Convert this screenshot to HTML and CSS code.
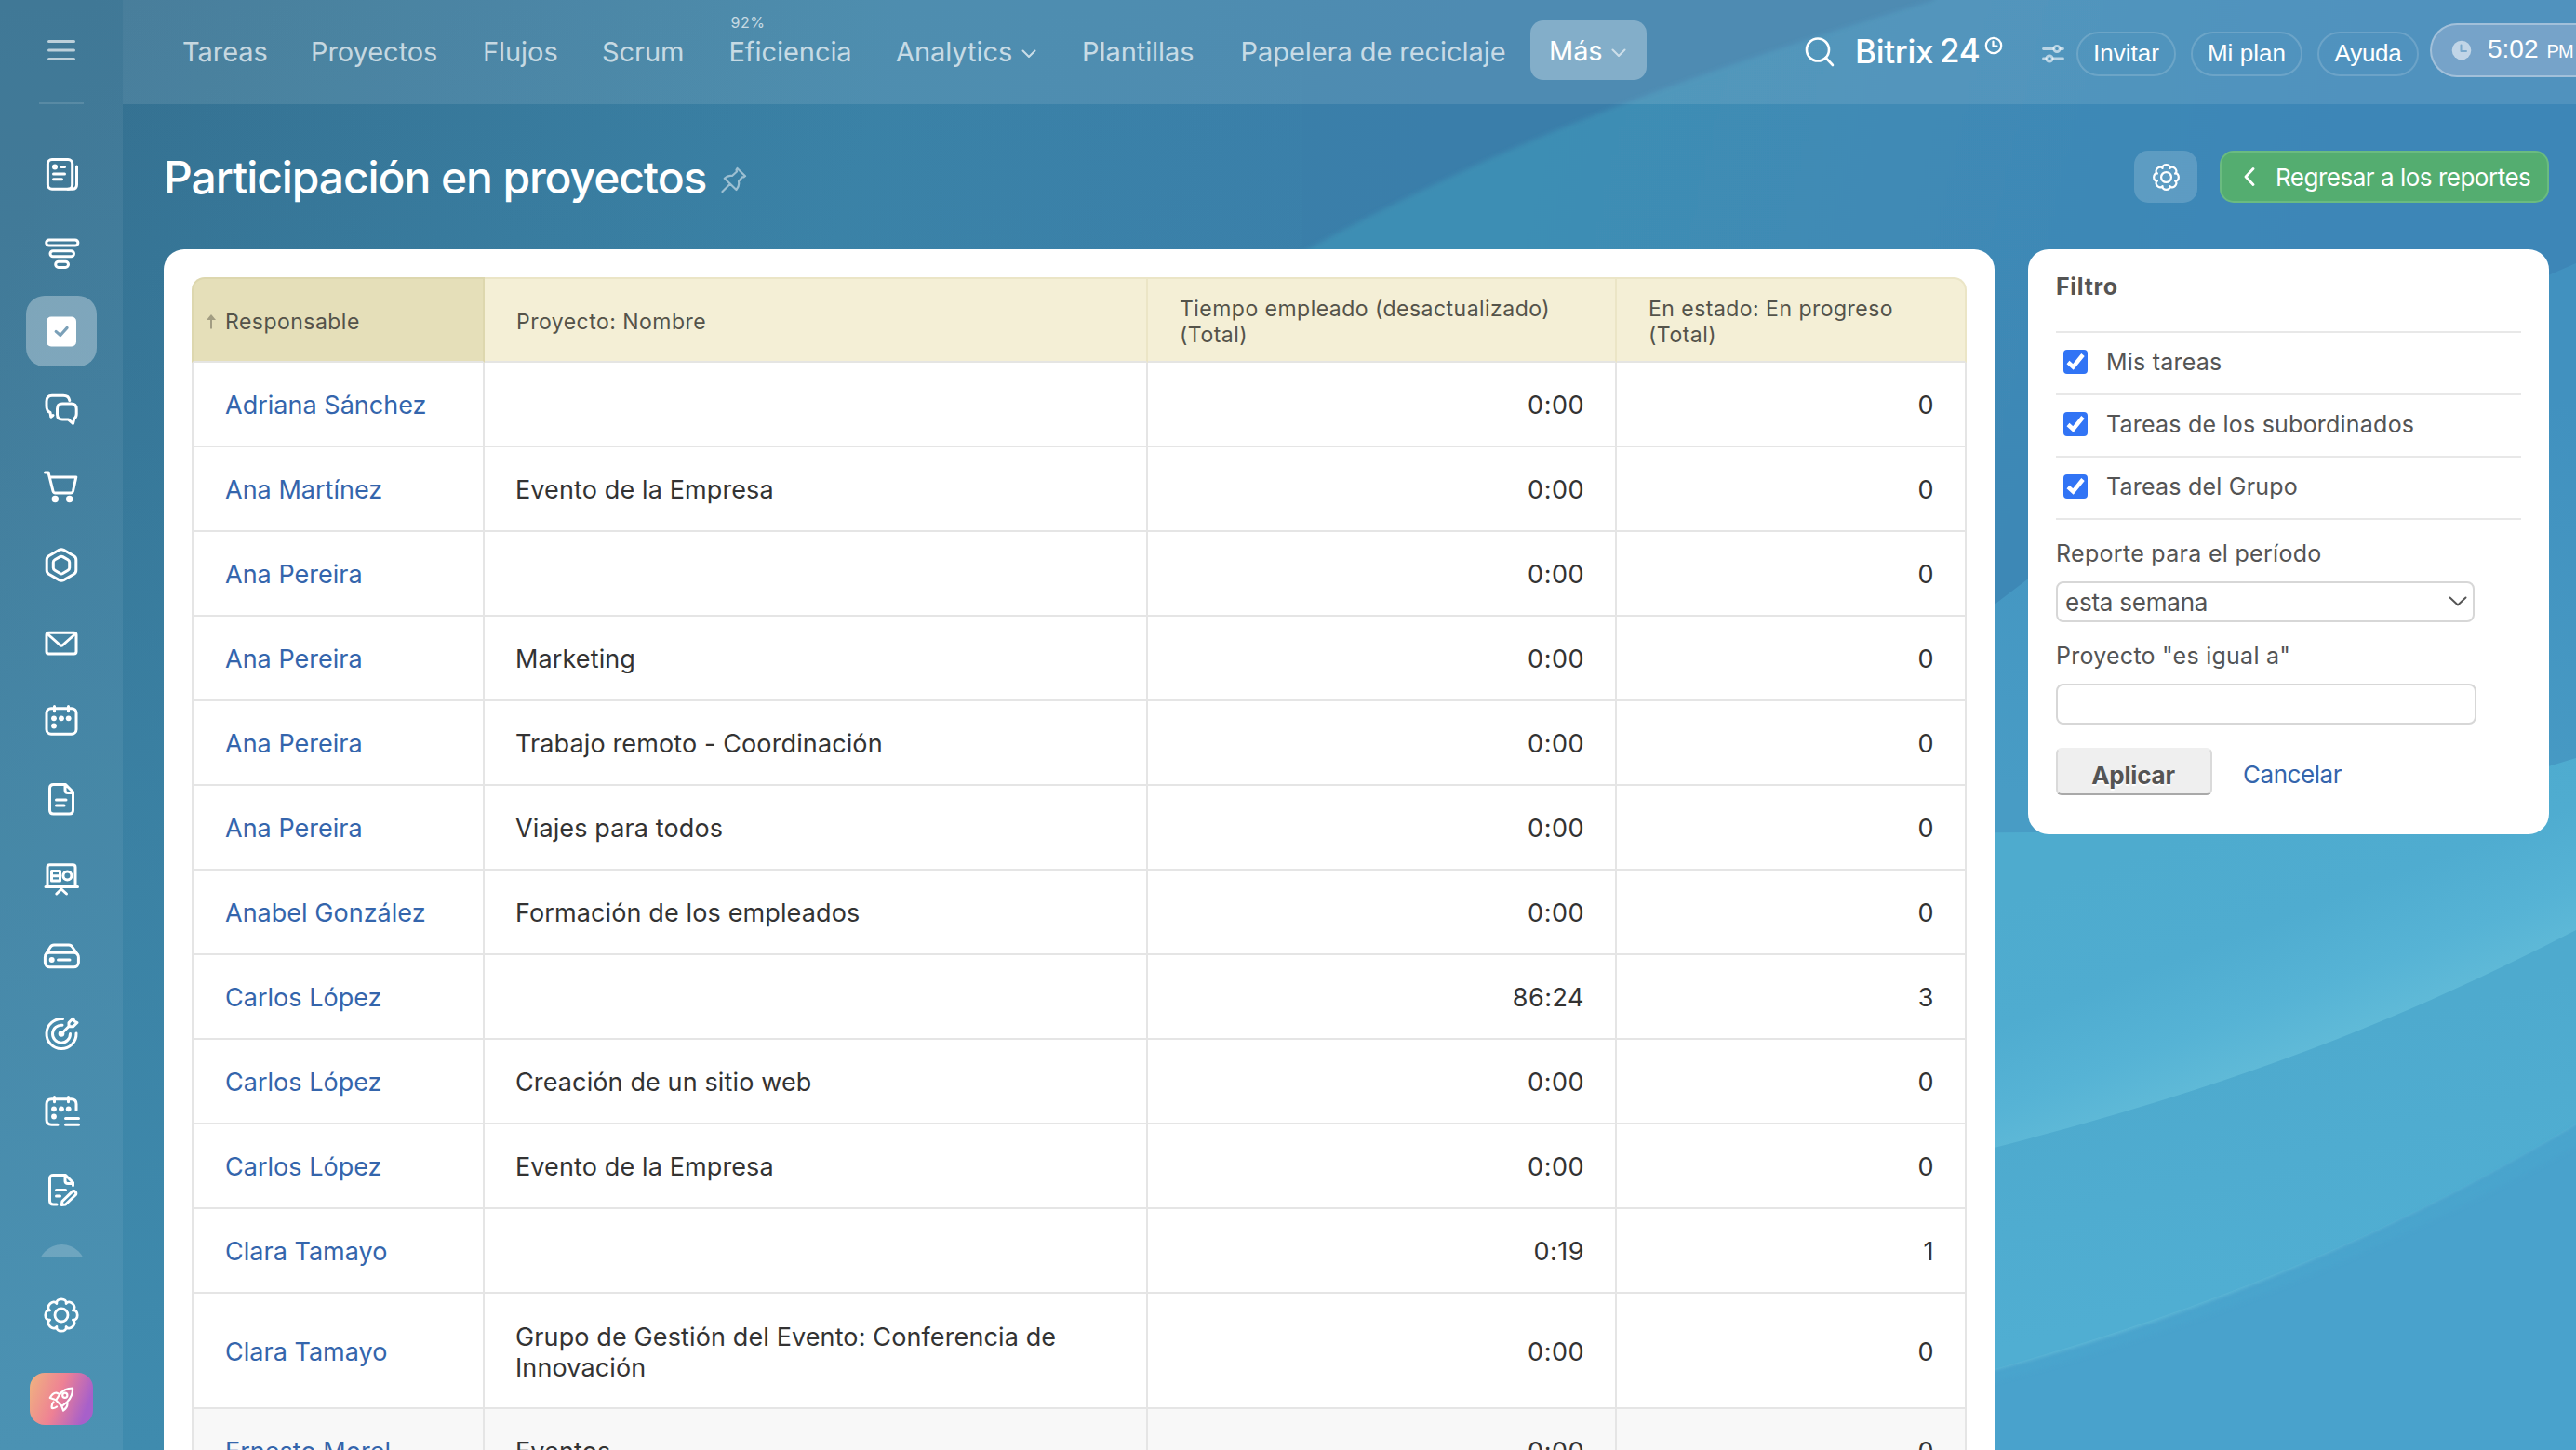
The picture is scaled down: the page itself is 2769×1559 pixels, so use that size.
FILE: index.html
```
<!DOCTYPE html>
<html lang="es">
<head>
<meta charset="utf-8">
<title>Participación en proyectos</title>
<link rel="stylesheet" href="styles.css">
</head>
<body>
<svg class="wallpaper" viewBox="0 0 2769 1559" preserveAspectRatio="none" aria-hidden="true">
  <defs>
    <linearGradient id="base" gradientUnits="userSpaceOnUse" x1="100" y1="0" x2="1700" y2="500">
      <stop offset="0" stop-color="#346f8f"/><stop offset=".5" stop-color="#3a81a6"/><stop offset=".85" stop-color="#3a7eaa"/><stop offset="1" stop-color="#3a7eaa"/>
    </linearGradient>
    <linearGradient id="down" x1="0" y1="0" x2="0" y2="1">
      <stop offset="0" stop-color="#3f8cae" stop-opacity="0"/><stop offset=".3" stop-color="#3f8cae" stop-opacity=".2"/><stop offset="1" stop-color="#3f8bae"/>
    </linearGradient>
    <linearGradient id="ray" gradientUnits="userSpaceOnUse" x1="1650" y1="100" x2="2500" y2="300">
      <stop offset="0" stop-color="#3e8eb4"/><stop offset=".45" stop-color="#3f8ab5"/><stop offset="1" stop-color="#3d86b7"/>
    </linearGradient>
    <linearGradient id="mid" gradientUnits="userSpaceOnUse" x1="2500" y1="380" x2="2400" y2="900">
      <stop offset="0" stop-color="#4191bf"/><stop offset="1" stop-color="#489cc5"/>
    </linearGradient>
    <linearGradient id="wave" gradientUnits="userSpaceOnUse" x1="2380" y1="880" x2="2480" y2="1140">
      <stop offset="0" stop-color="#4eabce"/><stop offset=".45" stop-color="#4facd0"/><stop offset=".75" stop-color="#56b3d5"/><stop offset="1" stop-color="#61bbd8"/>
    </linearGradient>
    <linearGradient id="low" gradientUnits="userSpaceOnUse" x1="2440" y1="1130" x2="2500" y2="1360">
      <stop offset="0" stop-color="#4eaace"/><stop offset="1" stop-color="#50aed2"/>
    </linearGradient>
    <filter id="soft" x="-5%" y="-5%" width="110%" height="110%"><feGaussianBlur stdDeviation="2.5"/></filter>
  </defs>
  <rect width="2769" height="1559" fill="url(#base)"/>
  <rect width="1400" height="1559" fill="url(#down)"/>
  <path filter="url(#soft)" d="M1300 330Q1420 255 1560 190Q1760 95 2080 0V-40H2800V700H1300Z" fill="url(#ray)"/>
  <path d="M2100 685Q2400 440 2769 283V1559H2100Z" fill="url(#mid)"/>
  <path d="M2100 895Q2500 900 2769 815V1559H2100Z" fill="url(#wave)"/>
  <path filter="url(#soft)" d="M2100 1484C2340 1425 2560 1335 2800 1190V1620H2100Z" fill="#49a2cc"/>
  <path d="M2100 1245C2370 1178 2560 1108 2769 1000V1208C2560 1335 2340 1420 2100 1484Z" fill="url(#low)"/>
  <path filter="url(#soft)" d="M2100 1488C2340 1429 2560 1341 2800 1193V1215C2560 1349 2340 1437 2100 1496Z" fill="#4aa4cd"/>
</svg>

<div class="app">
  <aside class="sidebar">
    <div class="burger"><svg width="32" height="24" viewBox="0 0 32 24"><path d="M2.500 2.500H29.500M2.500 12H29.500M2.500 21.500H29.500"/></svg></div>
    <div class="menu">
      <div class="item"><svg viewBox="0 0 84 84"><rect x="27.400" y="26.500" width="26.300" height="31.800" rx="4.500"/><path d="M58.500 34V53.500Q58.500 58.300 53.500 58.300H49M42 34.500H45.500M33.500 42H45.500M33.500 47.800H42.500"/><circle class="fill" cx="35" cy="34.500" r="3"/></svg></div>
      <div class="item"><svg viewBox="0 0 84 84"><rect x="25.700" y="28.900" width="34.200" height="6.200" rx="3.100"/><rect x="30" y="40.800" width="25.500" height="6" rx="3"/><rect x="35.700" y="52.200" width="13.800" height="6.200" rx="3.100"/></svg></div>
      <div class="item active"><svg viewBox="0 0 84 84"><rect class="fill" x="26" y="26.500" width="32" height="32" rx="5"/><path class="tick" d="M35.500 42.500L40.800 47L48.800 38"/></svg></div>
      <div class="item"><svg viewBox="0 0 84 84"><path d="M33 49.500L30.800 51.200L30 46.500Q26 45 26 39.500V34.500Q26 28.300 32 28.300H44Q50 28.300 50.800 33.500"/><path d="M43 37H52.500Q58.200 37 58.200 42.800V48Q58.200 51.500 55.800 53.200L54.500 58.300L49.500 54H43Q37.500 54 37.500 48.500V42.500Q37.500 37 43 37Z"/></svg></div>
      <div class="item"><svg viewBox="0 0 84 84"><path d="M24.500 27H28L33 47Q33.500 49 35.500 49H52Q54 49 54.500 47L57.800 32H29.500"/><circle class="fill" cx="35.300" cy="55.500" r="3.700"/><circle class="fill" cx="50.700" cy="55.500" r="3.700"/></svg></div>
      <div class="item"><svg viewBox="0 0 84 84"><path d="M39.500 26.300Q42 25.200 44.500 26.300L55.500 32.700Q57.800 34.200 57.800 37V48Q57.800 50.800 55.500 52.300L44.500 58.600Q42 59.900 39.500 58.600L28.500 52.300Q26.200 50.800 26.200 48V37Q26.200 34.200 28.500 32.700Z"/><path d="M40.500 33.600Q42 32.800 43.500 33.600L49 36.800Q50.700 37.800 50.700 39.500V45.500Q50.700 47.200 49 48.200L43.500 51.500Q42 52.300 40.500 51.500L35 48.200Q33.300 47.200 33.300 45.500V39.500Q33.300 37.800 35 36.800Z"/></svg></div>
      <div class="item"><svg viewBox="0 0 84 84"><rect x="26" y="31.200" width="32" height="22.800" rx="2.500"/><path d="M27 32.500L40.500 44.500Q42 45.700 43.500 44.500L57 32.500"/></svg></div>
      <div class="item"><svg viewBox="0 0 84 84"><rect x="26" y="28.700" width="32" height="27.500" rx="5"/><path d="M34.500 26.500V31.800M49.500 26.500V31.800"/><g class="fill"><circle cx="34" cy="39.300" r="2.900"/><circle cx="42" cy="39.300" r="2.900"/><circle cx="49.700" cy="39.300" r="2.900"/><circle cx="34" cy="47.500" r="2.900"/></g></svg></div>
      <div class="item"><svg viewBox="0 0 84 84"><path d="M33.500 26.500H46.500L54.500 34.500V54Q54.500 58 50.500 58H33.500Q29.500 58 29.500 54V30.500Q29.500 26.500 33.500 26.500ZM46 27V32.500Q46 35.500 49 35.500H54M36.500 43H47M36.500 49H45"/></svg></div>
      <div class="item"><svg viewBox="0 0 84 84"><path d="M27 52V31.500Q27 28.800 29.700 28.800H54.300Q57 28.800 57 31.500V52M25 52.500H59.500M36.800 60L42 55L47.500 60M31.500 35.500H40.500V46H31.500ZM31.500 40.700H40.500"/><circle cx="48.400" cy="40.600" r="4.500"/></svg></div>
      <div class="item"><svg viewBox="0 0 84 84"><path d="M25 41.500L30 33.500Q31.500 31 34 31H50Q52.500 31 54 33.500L59.500 41.500"/><rect x="24.400" y="39.300" width="36" height="15.500" rx="5"/><path d="M38.500 47H51"/><circle class="fill" cx="31.700" cy="47" r="3"/></svg></div>
      <div class="item"><svg viewBox="0 0 84 84"><path d="M43.500 26.600A16 16 0 1 0 58 42M43 33.200A9.500 9.500 0 1 0 51.500 42.500M42 42.500L50.500 34M50 34.500V30.500L54.500 26L56 29L59 30.500L54.500 34.800Z"/><circle class="fill" cx="42" cy="42.500" r="3.300"/></svg></div>
      <div class="item"><svg viewBox="0 0 84 84"><path d="M38 56.300H31.500Q26 56.300 26 51V34Q26 28.700 31.500 28.700H52.500Q58 28.700 58 34V40.500M34.500 26.500V31.800M49.500 26.500V31.800M46.500 49.500H60.500M46.500 56.300H60.500"/><g class="fill"><circle cx="34" cy="39.300" r="2.900"/><circle cx="42" cy="39.300" r="2.900"/><circle cx="49.700" cy="39.300" r="2.900"/><circle cx="34" cy="47.500" r="2.900"/></g></svg></div>
      <div class="item"><svg viewBox="0 0 84 84"><path d="M37 58H33.500Q29.500 58 29.500 54V30.500Q29.500 26.500 33.500 26.500H46.500L54.500 34.500V37.500M46 27V32.500Q46 35.500 49 35.500H54M36.500 42.500H46.500M36.500 49H40.500M42.300 58.500L43 54.500L53.500 44.300Q55.500 42.800 57.200 44.500Q58.500 46.300 57 48L46.500 58Z"/></svg></div>
      <div class="item more"><span></span></div>
    </div>
    <div class="gear"><svg viewBox="-20 -20 40 40" width="40" height="40"><path d="M12.400 -5.100C18.800 -6.600 18.800 6.600 12.400 5.100C18 8.600 8.600 18 5.100 12.400C6.600 18.800 -6.600 18.800 -5.100 12.400C-8.600 18 -18 8.600 -12.400 5.100C-18.800 6.600 -18.800 -6.600 -12.400 -5.100C-18 -8.600 -8.600 -18 -5.100 -12.400C-6.600 -18.800 6.600 -18.800 5.100 -12.400C8.600 -18 18 -8.600 12.400 -5.100Z"/><circle r="7"/></svg></div>
    <div class="rocket"><svg viewBox="0 0 28 28" width="28" height="28"><path d="M26 2.500Q26.500 11 20.500 17L14.500 22L8.200 15.500L12 9.500Q17 2.500 26 2.500ZM12 9L8.500 7.500Q4 8 1.800 13L8.200 15.200M20.200 17.500Q21.500 22.500 16 26.500L14.500 22.300M5.500 17.500Q3 20 3.800 24Q7 24.300 9 22.500"/><circle cx="17.800" cy="10.200" r="2.600"/></svg></div>
  </aside>

  <div class="content">
    <header class="topbar">
      <nav class="tabs">
        <a>Tareas</a><a>Proyectos</a><a>Flujos</a><a>Scrum</a>
        <a class="eff"><small>92%</small>Eficiencia</a>
        <a>Analytics <svg class="chev" viewBox="0 0 16 10"><path d="M1.500 1.500L8 8L14.500 1.500"/></svg></a>
        <a>Plantillas</a><a>Papelera de reciclaje</a>
        <a class="current">Más <svg class="chev" viewBox="0 0 16 10"><path d="M1.500 1.500L8 8L14.500 1.500"/></svg></a>
      </nav>
      <svg class="search" viewBox="0 0 32 32"><circle cx="14" cy="13.500" r="12"/><path d="M22.500 22L30 30"/></svg>
      <div class="logo"><b>Bitrix</b><i>24</i><svg viewBox="0 0 20 20"><circle cx="10" cy="10" r="8.200"/><path d="M9.500 5.500V10.500H13.500"/></svg></div>
      <svg class="sliders" viewBox="0 0 24 22"><path d="M1.500 5.500H12M20 5.500H22.500M1.500 16H4M12 16H22.500"/><circle cx="16" cy="5.500" r="3.200"/><circle cx="8" cy="16" r="3.200"/></svg>
      <div class="pill invite">Invitar</div>
      <div class="pill plan">Mi plan</div>
      <div class="pill help">Ayuda</div>
      <div class="clock"><svg viewBox="0 0 22 22"><circle cx="11" cy="11" r="10.300"/><path d="M10.500 5.500V12H16"/></svg><span>5:02</span><small>PM</small></div>
    </header>

    <div class="titlebar">
      <h1>Participación en proyectos</h1>
      <svg class="pin" viewBox="0 0 28 28"><path d="M17.500 2L26 10.200L24.200 11.500L23 11.300L19 16Q20 21 16.500 25L3.800 12.800Q7.500 9 12 10L17 5.500L16.500 3.500ZM9.800 18.800L1.500 27"/></svg>
      <button class="settings"><svg viewBox="-20 -20 40 40"><path d="M12.400 -5.100C18.800 -6.600 18.800 6.600 12.400 5.100C18 8.600 8.600 18 5.100 12.400C6.600 18.800 -6.600 18.800 -5.100 12.400C-8.600 18 -18 8.600 -12.400 5.100C-18.800 6.600 -18.800 -6.600 -12.400 -5.100C-18 -8.600 -8.600 -18 -5.100 -12.400C-6.600 -18.800 6.600 -18.800 5.100 -12.400C8.600 -18 18 -8.600 12.400 -5.100Z"/><circle r="7"/></svg></button>
      <button class="back"><svg viewBox="0 0 12 20"><path d="M10 1.500L2 10L10 18.500"/></svg>Regresar a los reportes</button>
    </div>

    <main class="panels">
      <section class="card report">
        <table>
          <colgroup><col class="c1"><col class="c2"><col class="c3"><col class="c4"></colgroup>
          <thead><tr><th class="sorted"><svg class="arrow" viewBox="0 0 12 16"><path d="M6 15.500V5"/><path class="head" d="M6 0L11 6H1Z"/></svg>Responsable</th><th>Proyecto: Nombre</th><th>Tiempo empleado (desactualizado) (Total)</th><th>En estado: En progreso (Total)</th></tr></thead>
          <tbody>
            <tr><td><a>Adriana Sánchez</a></td><td></td><td>0:00</td><td>0</td></tr>
            <tr><td><a>Ana Martínez</a></td><td>Evento de la Empresa</td><td>0:00</td><td>0</td></tr>
            <tr><td><a>Ana Pereira</a></td><td></td><td>0:00</td><td>0</td></tr>
            <tr><td><a>Ana Pereira</a></td><td>Marketing</td><td>0:00</td><td>0</td></tr>
            <tr><td><a>Ana Pereira</a></td><td>Trabajo remoto - Coordinación</td><td>0:00</td><td>0</td></tr>
            <tr><td><a>Ana Pereira</a></td><td>Viajes para todos</td><td>0:00</td><td>0</td></tr>
            <tr><td><a>Anabel González</a></td><td>Formación de los empleados</td><td>0:00</td><td>0</td></tr>
            <tr><td><a>Carlos López</a></td><td></td><td>86:24</td><td>3</td></tr>
            <tr><td><a>Carlos López</a></td><td>Creación de un sitio web</td><td>0:00</td><td>0</td></tr>
            <tr><td><a>Carlos López</a></td><td>Evento de la Empresa</td><td>0:00</td><td>0</td></tr>
            <tr><td><a>Clara Tamayo</a></td><td></td><td>0:19</td><td>1</td></tr>
            <tr class="tall"><td><a>Clara Tamayo</a></td><td>Grupo de Gestión del Evento: Conferencia de Innovación</td><td>0:00</td><td>0</td></tr>
            <tr class="hover"><td><a>Ernesto Morel</a></td><td>Eventos</td><td>0:00</td><td>0</td></tr>
          </tbody>
        </table>
      </section>

      <aside class="card filter">
        <h2>Filtro</h2>
        <ul class="checks">
          <li><svg viewBox="0 0 26 26"><rect width="26" height="26" rx="4"/><path d="M5 13.500L10.500 18.500L21 5.500"/></svg>Mis tareas</li>
          <li><svg viewBox="0 0 26 26"><rect width="26" height="26" rx="4"/><path d="M5 13.500L10.500 18.500L21 5.500"/></svg>Tareas de los subordinados</li>
          <li><svg viewBox="0 0 26 26"><rect width="26" height="26" rx="4"/><path d="M5 13.500L10.500 18.500L21 5.500"/></svg>Tareas del Grupo</li>
        </ul>
        <label class="field-label">Reporte para el período</label>
        <div class="select"><span>esta semana</span><svg viewBox="0 0 20 12"><path d="M1.500 1.500L10 9.500L18.500 1.500"/></svg></div>
        <label class="field-label project">Proyecto "es igual a"</label>
        <input class="text" type="text">
        <div class="actions"><button class="apply">Aplicar</button><a class="cancel">Cancelar</a></div>
      </aside>
    </main>
  </div>
</div>
</body>
</html>
```
FILE: styles.css
```
* { box-sizing: border-box; }
html, body { margin: 0; width: 2769px; height: 1559px; overflow: hidden; }
body { font-family: Inter, "Open Sans", sans-serif; color: #333; background: #3a7ea9; }
svg { flex: none; fill: none; stroke: #fff; stroke-width: 2.8; stroke-linecap: round; stroke-linejoin: round; }
button { font: inherit; margin: 0; cursor: pointer; }

.wallpaper { position: absolute; left: 0; top: 0; width: 2769px; height: 1559px; stroke: none; }
.app { position: relative; display: flex; width: 2769px; height: 1559px; overflow: hidden; }

/* sidebar */
.sidebar { flex: none; width: 132px; height: 1559px; display: flex; flex-direction: column; align-items: center; background: rgba(255,255,255,.062); }
.burger { width: 48px; height: 112px; padding-top: 42px; display: flex; justify-content: center; border-bottom: 2px solid rgba(255,255,255,.13); }
.burger svg { opacity: .65; stroke-width: 3; }
.menu { width: 132px; height: 1240px; padding-top: 33px; overflow: hidden; }
.item { height: 84px; display: flex; align-items: center; justify-content: center; }
.item svg { width: 84px; height: 84px; margin-top: -1px; stroke-width: 3; }
.fill, .item .fill { fill: #fff; stroke: none; }
.item.active svg { width: 76px; height: 76px; margin: 1px 4px 0; border-radius: 20px; background: rgba(255,255,255,.32); }
.item.active .fill { transform: scale(1.105); transform-origin: 42px 42px; }
.tick { stroke: #7ba0b8; stroke-width: 3.400; }
.item.more span { width: 51px; height: 51px; margin-top: 1px; border-radius: 50%; background: rgba(255,255,255,.2); }
.gear { height: 124px; display: flex; align-items: center; }
.rocket { width: 68px; height: 56px; border-radius: 16px; display: flex; align-items: center; justify-content: center; background: linear-gradient(110deg, #f0b47f 0%, #ee8194 45%, #a760ca 85%); }
.rocket svg { stroke-width: 2.200; }

/* top bar */
.content { flex: none; width: 2637px; }
.topbar { height: 112px; padding-left: 64px; display: flex; align-items: center; background: rgba(255,255,255,.1); font-size: 29px; }
.tabs { flex: none; height: 110px; margin-bottom: 2px; display: grid; grid-template-columns: 138px 185px 128px 136.500px 179.500px 200px 170.500px 311.500px 125px; align-items: center; color: rgba(255,255,255,.7); white-space: nowrap; letter-spacing: -.06px; }
.chev { width: 16px; height: 10px; margin-left: 2px; vertical-align: 3px; stroke: currentColor; stroke-width: 2; }
.eff { position: relative; }
.eff small { position: absolute; left: 2px; top: -24px; font-size: 16px; letter-spacing: .5px; }
.current { height: 64px; line-height: 66px; margin-top: -2px; padding-left: 20px; border-radius: 14px; background: rgba(255,255,255,.3); color: #fff; }
.current .chev { opacity: .6; margin-left: 1px; }
.search { width: 32px; height: 32px; margin-left: 170px; stroke-width: 2.600; }
.logo { flex: none; width: 201px; margin-left: 22px; display: flex; align-items: center; color: #fff; font-size: 35px; letter-spacing: -.3px; }
.logo b, .logo i { font-weight: 500; font-style: normal; margin-top: -2px; }
.logo b { width: 91px; }
.logo i { width: 48px; margin-top: -4px; }
.logo svg { width: 20px; height: 20px; margin-top: -14px; stroke-width: 2.200; }
.sliders { width: 24px; height: 22px; margin: 4px 13px 0 0; stroke: rgba(255,255,255,.6); stroke-width: 2.800; }
.pill { flex: none; height: 48px; margin: 4px 16px 0 0; padding-bottom: 2px; border: 2px solid rgba(255,255,255,.16); border-radius: 24px; display: flex; align-items: center; justify-content: center; color: #fff; font: 26px "Liberation Sans", Arial, sans-serif; letter-spacing: .05px; }
.invite { width: 107px; }
.plan { width: 120px; }
.help { width: 109px; margin-right: 12px; letter-spacing: -.3px; }
.clock { flex: none; width: 220px; height: 58px; margin-top: -4px; padding-left: 21px; border: 2px solid rgba(255,255,255,.32); border-radius: 29px; display: flex; align-items: center; color: #fff; background: rgba(200,200,225,.32); font: 28px "Liberation Sans", Arial, sans-serif; }
.clock svg { width: 22px; height: 22px; fill: rgba(255,255,255,.55); stroke: none; }
.clock svg path { fill: none; stroke: #7aa9cc; stroke-width: 2; }
.clock span { margin: -3px 9px 0 17px; }
.clock small { font-size: 20px; margin-top: 2px; letter-spacing: -.9px; }

/* title row */
.titlebar { height: 156px; padding-left: 44px; display: flex; align-items: center; }
h1 { flex: none; width: 599px; margin: 0; font-size: 48px; font-weight: 500; letter-spacing: -1.100px; color: #fff; white-space: nowrap; }
.pin { width: 28px; height: 28px; margin-top: 5px; stroke: rgba(255,255,255,.5); stroke-width: 2.200; }
.settings { width: 68px; height: 56px; margin-left: 1491px; padding: 0; border: 0; border-radius: 15px; background: rgba(255,255,255,.17); display: flex; align-items: center; justify-content: center; }
.settings svg { width: 31px; height: 31px; stroke-width: 2.900; }
.back { flex: none; width: 354px; height: 56px; margin-left: 24px; padding: 0 0 0 24px; border: 2px solid #6abb80; border-radius: 15px; background: #54ad70; color: #fff; font-size: 26px; letter-spacing: -.49px; display: flex; align-items: center; white-space: nowrap; }
.back svg { width: 12px; height: 20px; margin-right: 22px; }

/* panels */
.panels { padding-left: 44px; display: flex; gap: 36px; align-items: flex-start; }
.card { flex: none; background: #fff; border-radius: 22px; }
.report { width: 1968px; height: 1400px; padding: 30px; }
table { width: 1908px; table-layout: fixed; border-collapse: separate; border-spacing: 0; font-size: 27px; letter-spacing: .12px; }
.c1 { width: 315px; } .c2 { width: 713px; } .c3 { width: 504px; } .c4 { width: 376px; }
th { position: relative; height: 92px; padding: 3px 30px 0 34px; text-align: left; vertical-align: middle; font-size: 23px; line-height: 28px; font-weight: 400; letter-spacing: .47px; color: #54534a; background: #f4efd6; border: solid #ebe5c6; border-width: 2px 2px 2px 0; border-bottom-color: #e5e5e3; }
th.sorted { background: #e5dfb9; border-color: #ddd7ae #ddd7ae #e5e5e3; border-left-width: 2px; border-top-left-radius: 14px; }
th:last-child { border-top-right-radius: 14px; }
.arrow { position: absolute; left: 13px; top: 38px; width: 12px; height: 16px; stroke: #a29d82; stroke-width: 2; stroke-linecap: butt; }
.arrow .head { fill: #a29d82; stroke: none; }
td { height: 91px; padding: 1px 34px 0 33px; line-height: 33px; vertical-align: middle; border: solid #e5e5e5; border-width: 0 2px 2px 0; }
td:first-child { border-left-width: 2px; padding-left: 34px; }
td:nth-child(n+3) { text-align: right; letter-spacing: .5px; padding-right: 33px; }
td a { color: #3465ac; white-space: nowrap; letter-spacing: .02px; }
.tall td { height: 124px; padding-top: 3px; }
.hover td { background: #f8f8f8; }

/* filter */
.filter { width: 560px; height: 629px; padding: 24px 30px 0; color: #545454; }
.filter h2 { margin: 0 0 32px; height: 32px; line-height: 32px; font-size: 25px; font-weight: 700; letter-spacing: .7px; }
.checks { list-style: none; margin: 0; padding: 0; border-top: 2px solid #e8e8e8; font-size: 25px; letter-spacing: .22px; }
.checks li { height: 67px; padding: 0 0 3px 8px; display: flex; align-items: center; gap: 20px; border-bottom: 2px solid #e8e8e8; }
.checks svg { width: 26px; height: 26px; stroke: #fff; stroke-width: 4.400; stroke-linecap: butt; stroke-linejoin: miter; }
.checks rect { fill: #3174f5; stroke: none; }
.field-label { display: block; margin: 20px 0 0; height: 32px; line-height: 32px; font-size: 25px; letter-spacing: .3px; }
.select { width: 450px; height: 44px; margin-top: 14px; padding: 0 6px 0 8px; border: 2px solid #d7d7d7; border-radius: 8px; display: flex; align-items: center; justify-content: space-between; font-size: 26px; letter-spacing: -.22px; }
.select svg { width: 20px; height: 12px; stroke: #555; stroke-width: 2; }
.field-label.project { margin-top: 20px; letter-spacing: .25px; }
.text { display: block; width: 452px; height: 44px; margin: 14px 0 25px; border: 2px solid #d7d7d7; border-radius: 8px; background: #fff; }
.actions { display: flex; align-items: center; gap: 33px; font-size: 26px; }
.apply { width: 168px; height: 51px; padding: 7px 2px 0 0; border: 2px solid #dadada; border-top-color: #efefef; border-bottom-color: #a9a9a9; border-radius: 6px; background: #efefef; color: #545454; font-weight: 700; letter-spacing: -.2px; text-shadow: 0 2px 1px #fff; }
.cancel { margin-top: 5px; color: #3465ac; letter-spacing: -.45px; }
```
